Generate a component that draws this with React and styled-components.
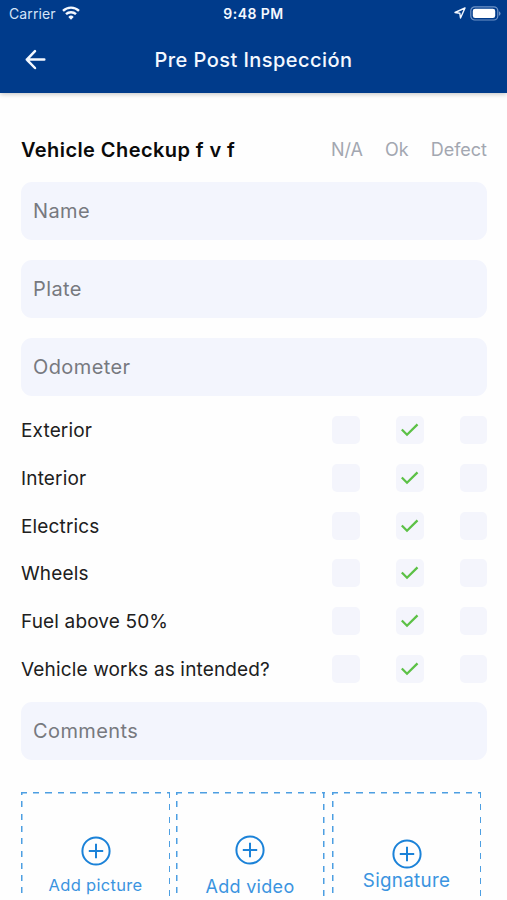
import React from 'react';
import styled, { createGlobalStyle } from 'styled-components';

const GlobalStyle = createGlobalStyle`
  * {
    box-sizing: border-box;
  }

  body {
    margin: 0;
    background-color: #fefefe;
    font-family: Inter, "Liberation Sans", sans-serif;
  }
`;

const Screen = styled.div`
  display: flex;
  flex-direction: column;
  width: 507px;
  height: 900px;
  overflow: hidden;
  background-color: #fefefe;
`;

const Header = styled.header`
  flex: none;
  height: 93.4px;
  background-color: #003b8b;
  color: #f4f8ff;
  box-shadow: 0 1px 5px rgba(0, 0, 0, 0.25);
`;

const StatusBar = styled.div`
  display: grid;
  grid-template-columns: 1fr auto 1fr;
  align-items: center;
  height: 27px;
  padding: 0 6px 0 9px;
`;

const StatusGroup = styled.div`
  display: flex;
  align-items: center;
  justify-content: ${({ $end }) => ($end ? 'flex-end' : 'flex-start')};
  gap: ${({ $end }) => ($end ? '4px' : '6px')};
  margin-top: -1px;
`;

const Carrier = styled.span`
  padding-top: 1px;
  font-size: 14px;
  line-height: 20px;
  letter-spacing: 0.1px;
  color: #d5e4f8;
`;

const Clock = styled.span`
  margin-left: -3px;
  font-size: 14px;
  line-height: 20px;
  font-weight: 600;
  letter-spacing: 0.45px;
`;

const NavBar = styled.div`
  display: grid;
  grid-template-columns: 60px 1fr 60px;
  align-items: center;
  height: 66px;
`;

const BackButton = styled.button`
  display: flex;
  padding: 0 0 0 24px;
  border: 0;
  background: none;
  color: inherit;
`;

const Title = styled.h1`
  margin: 0;
  font-size: 20px;
  line-height: 28px;
  font-weight: 500;
  letter-spacing: 0.45px;
  text-align: center;
`;

const Form = styled.main`
  flex: none;
  padding: 40.6px 20px 0 21px;
`;

const SectionHeader = styled.div`
  display: flex;
  align-items: center;
  justify-content: space-between;
  height: 32px;
  margin-bottom: 16px;
`;

const SectionTitle = styled.h2`
  margin: 0;
  font-size: 20px;
  font-weight: 600;
  letter-spacing: 0.42px;
  color: #0a0a0a;
`;

const Columns = styled.div`
  display: flex;
  gap: 22px;
  margin-top: -1px;
  font-size: 18px;
  color: #a3a7b1;
`;

const Field = styled.input`
  display: block;
  width: 100%;
  height: 58px;
  padding: 1px 12px 0;
  border: 0;
  border-radius: 11px;
  background-color: #f3f5fd;
  font-family: inherit;
  font-size: 20px;
  letter-spacing: 0.4px;
  color: #222;

  &::placeholder {
    color: #77797f;
    opacity: 1;
  }
`;

const FieldGroup = styled.div`
  display: grid;
  gap: 20px;
`;

const CheckList = styled.div`
  padding: 10.5px 0 9.5px;
`;

const CheckRow = styled.div`
  display: grid;
  grid-template-columns: 1fr 28px 28px 27px;
  column-gap: 36px;
  align-items: center;
  height: 47.67px;
`;

const CheckLabel = styled.span`
  padding-top: 1px;
  font-size: 19px;
  letter-spacing: 0.15px;
  white-space: nowrap;
  color: #202020;
`;

const CheckBox = styled.span`
  display: flex;
  align-items: center;
  justify-content: center;
  height: 28px;
  border-radius: 5px;
  background-color: #f4f5fc;
`;

const Uploads = styled.div`
  display: grid;
  grid-template-columns: 149.5px 149.5px 149.5px;
  column-gap: 5px;
  margin-top: 32px;
`;

// Dashed edges are painted as gradients so the dash length stays fixed
const UploadCard = styled.button`
  display: flex;
  flex-direction: column;
  align-items: center;
  width: 149px;
  height: 150px;
  margin: 0 0 0 ${({ $shift }) => $shift}px;
  padding: ${({ $top }) => $top}px 0 0;
  border: 0;
  color: #1b82d8;
  background:
    repeating-linear-gradient(90deg, #4d9fe2 0 6.2px, transparent 6.2px 12.2px) top / 100% 1.5px no-repeat,
    repeating-linear-gradient(180deg, #4d9fe2 0 3px, transparent 3px 9.3px, #4d9fe2 9.3px 12.3px) left / 1.5px 100% no-repeat,
    repeating-linear-gradient(180deg, #4d9fe2 0 6px, transparent 6px 12.3px) right / 1.5px 100% no-repeat;
`;

const UploadLabel = styled.span`
  margin-top: ${({ $gap }) => $gap}px;
  font-family: Inter, "Liberation Sans", sans-serif;
  font-size: ${({ $size }) => $size}px;
  line-height: 24px;
  letter-spacing: 0.3px;
  white-space: nowrap;
  color: #3b94e0;
`;

const WifiIcon = () => (
  <svg width="18" height="14" viewBox="0 0 18 14" fill="none" stroke="currentColor" strokeWidth="2.4">
    <path d="M1 4.9a11.5 11.5 0 0 1 16 0" />
    <path d="M4 8.2a7.2 7.2 0 0 1 10 0" />
    <path d="M9 13.8 6.3 10.9a3.9 3.9 0 0 1 5.4 0z" fill="currentColor" stroke="none" />
  </svg>
);

const LocationIcon = () => (
  <svg width="12" height="12" viewBox="0 0 12 12" fill="none" stroke="currentColor" strokeWidth="1.4" strokeLinejoin="round">
    <path d="M11 1 1 5.5l4.8.7.7 4.8z" />
  </svg>
);

const BatteryIcon = () => (
  <svg width="31" height="15" viewBox="0 0 31 15">
    <rect x="0.8" y="0.8" width="27" height="13.2" rx="4" fill="none" stroke="#6f94c7" strokeWidth="1.2" />
    <rect x="2.8" y="2.7" width="22.4" height="9.4" rx="2.4" fill="#fff" />
    <path d="M29 5.2a2.5 2.5 0 0 1 0 4.6z" fill="#6f94c7" />
  </svg>
);

const BackIcon = () => (
  <svg width="23" height="22" viewBox="0 0 23 22" fill="none" stroke="currentColor" strokeWidth="2.5" strokeLinecap="round" strokeLinejoin="round">
    <path d="M20.3 10.6H2.8M11 2.2 2.8 10.6l8.2 8.4" />
  </svg>
);

const CheckIcon = () => (
  <svg width="18" height="14" viewBox="0 0 18 14" fill="none" stroke="#5cc146" strokeWidth="2.3">
    <path d="M0.8 6.5 6 11.7 16.5 1.4" />
  </svg>
);

const PlusIcon = () => (
  <svg width="30" height="30" viewBox="0 0 30 30" fill="none" stroke="currentColor" strokeWidth="2">
    <circle cx="15" cy="15" r="13.6" />
    <path d="M15 7.8v14.4M7.8 15h14.4" />
  </svg>
);

const fields = ['Name', 'Plate', 'Odometer'];

const options = ['N/A', 'Ok', 'Defect'];

const checks = [
  { label: 'Exterior', value: 'Ok' },
  { label: 'Interior', value: 'Ok' },
  { label: 'Electrics', value: 'Ok' },
  { label: 'Wheels', value: 'Ok' },
  { label: 'Fuel above 50%', value: 'Ok' },
  { label: 'Vehicle works as intended?', value: 'Ok' }
];

const uploads = [
  { label: 'Add picture', top: 44, gap: 7.5, size: 16.5, shift: 0 },
  { label: 'Add video', top: 43.5, gap: 9.5, size: 18, shift: 0 },
  { label: 'Signature', top: 47.5, gap: 0, size: 18.8, shift: 2 }
];

const App = () => {
  return (
    <Screen>
      <GlobalStyle />
      <Header>
        <StatusBar>
          <StatusGroup>
            <Carrier>Carrier</Carrier>
            <WifiIcon />
          </StatusGroup>
          <Clock>9:48 PM</Clock>
          <StatusGroup $end>
            <LocationIcon />
            <BatteryIcon />
          </StatusGroup>
        </StatusBar>
        <NavBar>
          <BackButton aria-label="Back">
            <BackIcon />
          </BackButton>
          <Title>Pre Post Inspección</Title>
        </NavBar>
      </Header>

      <Form>
        <SectionHeader>
          <SectionTitle>Vehicle Checkup f v f</SectionTitle>
          <Columns>
            {options.map((option) => (
              <span key={option}>{option}</span>
            ))}
          </Columns>
        </SectionHeader>

        <FieldGroup>
          {fields.map((name) => (
            <Field key={name} placeholder={name} />
          ))}
        </FieldGroup>

        <CheckList>
          {checks.map(({ label, value }) => (
            <CheckRow key={label}>
              <CheckLabel>{label}</CheckLabel>
              {options.map((option) => (
                <CheckBox key={option}>{option === value && <CheckIcon />}</CheckBox>
              ))}
            </CheckRow>
          ))}
        </CheckList>

        <Field placeholder="Comments" />

        <Uploads>
          {uploads.map(({ label, top, gap, size, shift }) => (
            <UploadCard key={label} $top={top} $shift={shift}>
              <PlusIcon />
              <UploadLabel $gap={gap} $size={size}>{label}</UploadLabel>
            </UploadCard>
          ))}
        </Uploads>
      </Form>
    </Screen>
  );
};

export default App;
